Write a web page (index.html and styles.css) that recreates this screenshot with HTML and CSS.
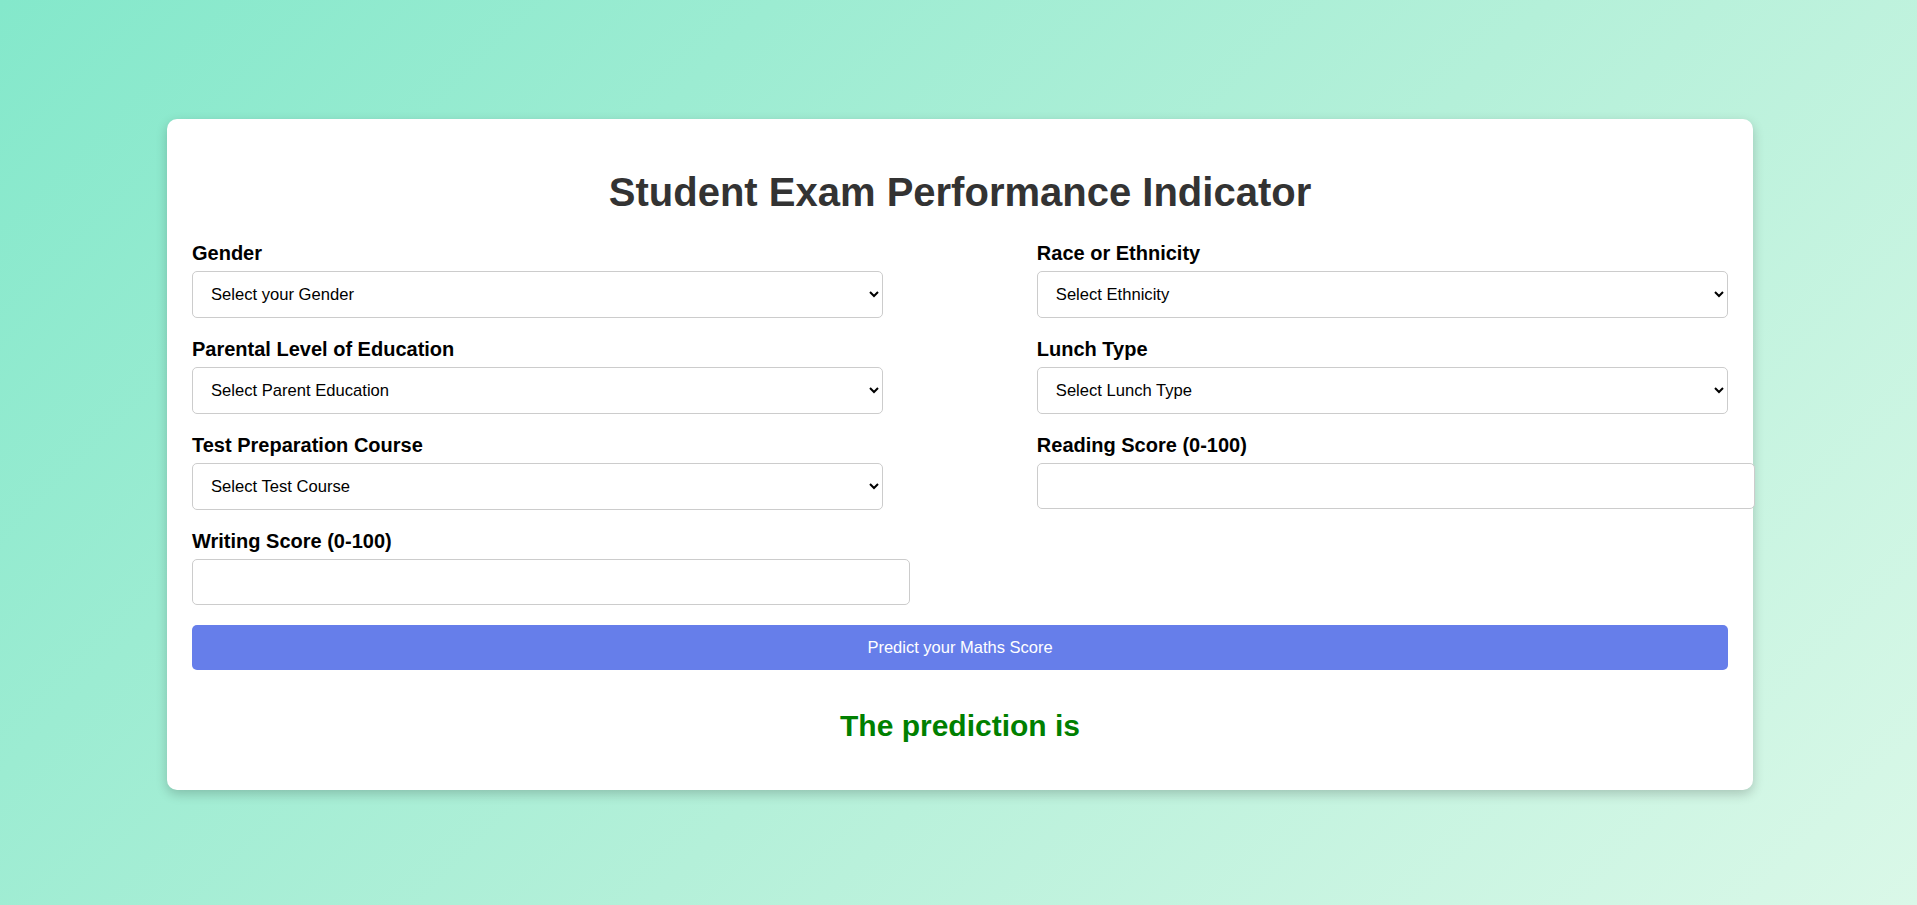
FILE: index.html
```html
<!DOCTYPE html>
<html lang="en">
<head>
<meta charset="utf-8">
<title>Student Exam Performance Indicator</title>
<link rel="stylesheet" href="styles.css">
</head>
<body>
<div class="page">
  <div class="card">
    <h1 class="title">Student Exam Performance Indicator</h1>
    <form class="form">
      <div class="group">
        <label class="label">Gender</label>
        <select class="field">
          <option>Select your Gender</option>
        </select>
      </div>
      <div class="group">
        <label class="label">Race or Ethnicity</label>
        <select class="field">
          <option>Select Ethnicity</option>
        </select>
      </div>
      <div class="group">
        <label class="label">Parental Level of Education</label>
        <select class="field">
          <option>Select Parent Education</option>
        </select>
      </div>
      <div class="group">
        <label class="label">Lunch Type</label>
        <select class="field">
          <option>Select Lunch Type</option>
        </select>
      </div>
      <div class="group">
        <label class="label">Test Preparation Course</label>
        <select class="field">
          <option>Select Test Course</option>
        </select>
      </div>
      <div class="group">
        <label class="label">Reading Score (0-100)</label>
        <input class="input" type="number">
      </div>
      <div class="group">
        <label class="label">Writing Score (0-100)</label>
        <input class="input" type="number">
      </div>
      <button class="button" type="button">Predict your Maths Score</button>
    </form>
    <h2 class="result">The prediction is</h2>
  </div>
</div>
</body>
</html>
```

FILE: styles.css
```css
html, body {
  margin: 0;
  padding: 0;
}

body {
  font-family: "Liberation Sans", Arial, sans-serif;
  background: linear-gradient(135deg, #84e8cb 0%, #b4f0d9 55%, #daf8e8 100%);
  min-height: 905px;
}

.page {
  min-height: 905px;
  box-sizing: border-box;
  display: flex;
  justify-content: center;
  align-items: flex-start;
  padding: 119px 0 0 3px;
}

.card {
  width: 1536px;
  padding: 22px 25px;
  background: #fff;
  border-radius: 10px;
  box-shadow: 0 4px 12px rgba(0, 0, 0, 0.2);
}

.title {
  margin: 28px 0 24px;
  text-align: center;
  font-size: 40px;
  line-height: 47px;
  font-weight: bold;
  color: #333;
}

.form {
  display: flex;
  flex-wrap: wrap;
  justify-content: space-between;
  margin: 0;
}

.group {
  width: 45%;
  margin-bottom: 18px;
}

.label {
  display: block;
  font-size: 20px;
  line-height: 27px;
  font-weight: bold;
  color: #000;
  margin-bottom: 4px;
}

.field {
  display: block;
  width: 100%;
  height: 47px;
  box-sizing: border-box;
  padding: 0 8px 0 14px;
  font-family: "Liberation Sans", Arial, sans-serif;
  font-size: 16.6px;
  color: #000;
  background: #fff;
  border: 1px solid #ccc;
  border-radius: 5px;
}

.input {
  display: block;
  width: 100%;
  box-sizing: content-box;
  padding: 12.5px;
  height: 19px;
  font-family: "Liberation Sans", Arial, sans-serif;
  font-size: 16.6px;
  border: 1px solid #ccc;
  border-radius: 5px;
  background: #fff;
}

.button {
  display: block;
  width: 100%;
  margin-top: 2px;
  padding: 13px;
  line-height: 19px;
  font-family: "Liberation Sans", Arial, sans-serif;
  font-size: 16.5px;
  color: #fff;
  background: #667eea;
  border: none;
  border-radius: 5px;
}

.result {
  margin: 39px 0 25px;
  text-align: center;
  font-size: 30px;
  line-height: 34px;
  font-weight: bold;
  color: #008000;
}
```
